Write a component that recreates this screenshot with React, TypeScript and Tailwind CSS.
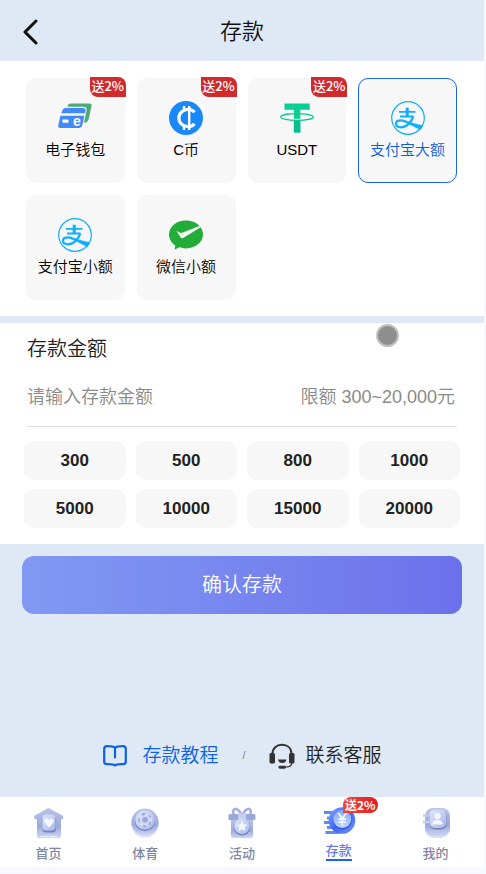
import { useState } from "react"
import type { ReactNode } from "react"
import clsx from "clsx"

function WalletIcon() {
    return (
        <svg viewBox="0 0 34 34" className="h-[34px] w-[34px]" aria-hidden="true">
            <path d="M13 2.500h18.500q2.500 0 2 2.500l-2.800 13q-.8 3.500-4.700 3.700l2.500-11.700q.8-4-3-4.200H9.500q.5-3.300 3.500-3.300z" fill="#4aab77" />
            <path d="M7.500 7h17.500q3 0 2.500 3l-.4 2.200H3.200l1.300-3q.9-2.200 3-2.200z" fill="#4389f5" />
            <path d="M2.400 14.800h24l-2.100 9.200q-.7 3-3.600 3H2.400q-2.700 0-2.100-2.900z" fill="#4389f5" />
            <rect x="4.500" y="18.500" width="6" height="3.200" rx=".6" fill="#fff" />
            <text x="18.800" y="25" textAnchor="middle" fontSize="14" fontWeight="700" fontFamily="Liberation Sans" fill="#fff">e</text>
        </svg>
    )
}

function CoinIcon() {
    return (
        <svg viewBox="0 0 34 34" className="h-[34px] w-[34px]" aria-hidden="true">
            <circle cx="17" cy="17" r="17" fill="#1989fa" />
            <g fill="none" stroke="#fff">
                <path d="M25.500 11.200A9 8.600 0 1 0 25.500 22.800" strokeWidth="3.200" />
                <path d="M15 5v5M15 24v5M20.200 5v24" strokeWidth="2.400" />
            </g>
        </svg>
    )
}

function TetherIcon() {
    return (
        <svg viewBox="0 0 34 34" className="h-[34px] w-[34px]" aria-hidden="true">
            <path d="M4.500 2.500h25.200v6.200h-9.400v22.800h-6.400V8.700H4.500z" fill="#08cf96" />
            <path d="M13.900 20h6.400v11.500h-6.400z" fill="#0bbd8a" />
            <path d="M13.900 17.800h6.400v1.200h-6.400z" fill="#f7f7f7" />
            <ellipse cx="17" cy="16" rx="16.300" ry="3.300" fill="none" stroke="#10c793" strokeWidth="1.200" />
        </svg>
    )
}

function AlipayIcon() {
    return (
        <svg viewBox="0 0 34 34" className="h-[34px] w-[34px]" aria-hidden="true">
            <circle cx="17" cy="17" r="16.300" fill="none" stroke="#10aeff" strokeWidth="1.200" />
            <g fill="none" stroke="#10aeff">
                <path d="M8 10.900h16.500M9 15.500h13.500" strokeWidth="1.900" />
                <path d="M16.200 6.700v8.800" strokeWidth="3" />
                <path d="M22.300 15.500c-2 5.600-6.600 10.800-12 10.800-3.300 0-5.400-1.400-5.300-3.500.1-2 2-3.400 4.700-3.400 3.600 0 7 2 11.200 3.900" strokeWidth="2.300" />
            </g>
            <path d="M16.500 20.300c5 1.500 10 3.300 15.800 3.900l-2.600 4.500c-4.500-1.500-9-4.200-13.500-6.200z" fill="#10aeff" />
        </svg>
    )
}

function WechatPayIcon() {
    return (
        <svg viewBox="0 0 34 34" className="h-[34px] w-[34px]" aria-hidden="true">
            <path d="M17 2.500C7.600 2.500 0 8.700 0 16.500c0 4.600 2.600 8.500 6.300 11l-.7 4.200 4.800-2.400c2 .7 4.200 1.100 6.600 1.100 9.400 0 17-6.200 17-13.900 0-2.600-.9-5.100-2.400-7.200L15 19.500c-1.400.9-2.700 1-3.700-.5L7.500 12.700c2 .8 3.500 2.600 5.600 2.100L30.500 8C27.500 4.700 22.600 2.500 17 2.500z" fill="#22ac38" />
        </svg>
    )
}

function BookIcon() {
    return (
        <svg viewBox="0 0 24 22" className="h-[22px] w-6" fill="none" stroke="#0b62e4" strokeWidth="2.200" strokeLinejoin="round" strokeLinecap="round" aria-hidden="true">
            <path d="M12 3C10.800 1.300 8.500 1.200 4 1.200 2 1.200 1.200 2 1.200 4v12.700c0 1.800.8 2.500 2.800 2.500 4.200 0 6.700-.2 8 1.400 1.300-1.600 3.800-1.400 8-1.400 2 0 2.800-.7 2.800-2.500V4c0-2-.8-2.800-2.800-2.800-4.500 0-6.800.1-8 1.800zM12 3V12.500" />
        </svg>
    )
}

function HeadsetIcon() {
    return (
        <svg viewBox="0 0 26 26" className="h-[26px] w-[26px]" aria-hidden="true">
            <path d="M3.500 11C3.500 5 7.500 1.800 13 1.800S22.500 5 22.500 11" fill="none" stroke="#333" strokeWidth="2" />
            <rect x=".5" y="10" width="5.500" height="10.500" rx="1.500" fill="#333" />
            <rect x="20" y="10" width="5.500" height="10.500" rx="1.500" fill="#333" />
            <path d="M9 16.500h8.500c-.5 2.300-2.100 3.600-4.200 3.600S9.500 18.800 9 16.500z" fill="#333" />
            <path d="M22.800 20c-.3 2.700-2.300 4-5.500 4" fill="none" stroke="#333" strokeWidth="1.300" />
            <rect x="9.500" y="22.700" width="7.500" height="3" rx="1.400" fill="#333" />
        </svg>
    )
}

// Shared gradients for the tab bar icons
function NavGradients() {
    return (
        <svg className="absolute h-0 w-0" aria-hidden="true">
            <defs>
                <linearGradient id="navBase" x1="0" y1="0" x2="0" y2="1">
                    <stop offset="0" stopColor="#b9c5ea" />
                    <stop offset=".6" stopColor="#9caad9" />
                    <stop offset="1" stopColor="#ccd5f3" />
                </linearGradient>
                <linearGradient id="navFront" x1="0" y1="0" x2="1" y2="1">
                    <stop offset="0" stopColor="#dfe6fb" />
                    <stop offset="1" stopColor="#a9b7e6" />
                </linearGradient>
                <linearGradient id="navCoin" x1="0" y1="0" x2="1" y2="1">
                    <stop offset="0" stopColor="#7fa6ff" />
                    <stop offset=".5" stopColor="#3f66ee" />
                    <stop offset="1" stopColor="#7196fb" />
                </linearGradient>
                <linearGradient id="navCoinFront" x1="0" y1="0" x2="0" y2="1">
                    <stop offset="0" stopColor="#83a9ff" />
                    <stop offset="1" stopColor="#c0d3ff" />
                </linearGradient>
            </defs>
        </svg>
    )
}

function HomeIcon() {
    return (
        <svg viewBox="0 0 36 36" className="h-9 w-9" aria-hidden="true">
            <path d="M17.300 3.500q1.200-.8 2.400 0L32.300 10.500q1 .7.8 2l-.2 1.700H31V31q0 2-2 2H9q-2 0-2-2V14.200H4.800l-.6-1.700q-.2-1.300.8-2z" fill="url(#navBase)" />
            <path d="M10 31.500h17" stroke="#e4e9fa" strokeWidth="1.500" />
            <rect x="12.500" y="11" width="13.500" height="16.500" rx="3.500" fill="#7583c2" />
            <rect x="12.500" y="9.500" width="13" height="16" rx="3.500" fill="url(#navFront)" />
            <path d="M19 22.500l-4.200-4.700c-2-2.700 1.700-6 4.200-3 2.500-3 6.200.3 4.200 3z" fill="#f6f8ff" />
        </svg>
    )
}

function SportIcon() {
    return (
        <svg viewBox="0 0 36 36" className="h-9 w-9" aria-hidden="true">
            <circle cx="18" cy="18.500" r="14" fill="#d9e0f6" />
            <circle cx="18" cy="17" r="13.500" fill="url(#navBase)" />
            <circle cx="18" cy="16.200" r="10" fill="#7280c1" />
            <circle cx="18" cy="15" r="9.800" fill="url(#navFront)" />
            <circle cx="18" cy="15" r="7.200" fill="#d3dcf8" />
            <path d="M16 12.500l3.500-.7 2 3-2 3-3.500-.6-1-2.500zM14.500 8.500l4-.7-.5 2.200-2.800.8zM22 9.500l2.500 3-1.800.3-1.500-2zM11 13l1.800 1 .2 3-1.500.8zM16 20l3 .3v2h-2.500zM22.500 16.500l2 .5-2 3.500-1.200-.8z" fill="#9aa9da" />
        </svg>
    )
}

function GiftIcon() {
    return (
        <svg viewBox="0 0 36 36" className="h-9 w-9" aria-hidden="true">
            <path d="M17 9C14 3 9.500 2.500 9.300 6.500 9.200 8.500 10 10 11 10.500M19 9c3-6 7.500-6.500 7.700-2.500.1 2-.7 3.500-1.700 4" fill="none" stroke="#a4b1dd" strokeWidth="2.600" />
            <path d="M7 14h22v17q0 2-2 2H9q-2 0-2-2z" fill="url(#navBase)" />
            <rect x="4.500" y="9" width="27" height="6" rx="1.500" fill="#9ba9da" />
            <path d="M14 8.500h8V15h-8z" fill="#c4cef0" />
            <circle cx="18" cy="22.500" r="8" fill="#7583c2" />
            <circle cx="18" cy="21.300" r="7.700" fill="url(#navFront)" />
            <path d="M18 15.800l1.700 3.400 3.700.5-2.700 2.600.7 3.700-3.400-1.800-3.400 1.800.7-3.700-2.700-2.600 3.700-.5z" fill="#f4f6ff" />
        </svg>
    )
}

function DepositIcon() {
    return (
        <svg viewBox="0 0 36 36" className="h-9 w-9" aria-hidden="true">
            <path d="M3 7.500h10M6 13h9M3 17.500h10M6 22.500h9M4.500 27.500h13" stroke="#6389f2" strokeWidth="3" />
            <circle cx="21" cy="15.500" r="13.300" fill="url(#navCoin)" />
            <circle cx="21.500" cy="15" r="9.300" fill="#3157d8" />
            <circle cx="21.300" cy="14" r="9" fill="url(#navCoinFront)" />
            <path d="M17.300 8l4 5.500L25.300 8M21.300 13.500V20.500M17.500 14h7.600M17.500 17.200h7.600" fill="none" stroke="#f5f8ff" strokeWidth="1.800" />
        </svg>
    )
}

function MineIcon() {
    return (
        <svg viewBox="0 0 36 36" className="h-9 w-9" aria-hidden="true">
            <rect x="7" y="4" width="25" height="29" rx="9" fill="#d9e0f6" />
            <rect x="7" y="3" width="25" height="28" rx="8" fill="url(#navBase)" />
            <rect x="11.500" y="6" width="17" height="18.500" rx="5" fill="#7583c2" />
            <rect x="11.500" y="4.500" width="16.500" height="18.500" rx="5" fill="url(#navFront)" />
            <path d="M5 10.500h6M5 17h6" stroke="#c3cdec" strokeWidth="2.400" />
            <circle cx="19.500" cy="11" r="3.200" fill="#f4f6ff" />
            <path d="M14 19.500q.5-4.500 5.500-4.500t5.500 4.500z" fill="#f4f6ff" />
        </svg>
    )
}

type Method = { id: string; label: string; icon: ReactNode; bonus?: string }

const METHODS: Method[] = [
    { id: "wallet", label: "电子钱包", icon: <WalletIcon />, bonus: "送2%" },
    { id: "ccoin", label: "C币", icon: <CoinIcon />, bonus: "送2%" },
    { id: "usdt", label: "USDT", icon: <TetherIcon />, bonus: "送2%" },
    { id: "alipay-large", label: "支付宝大额", icon: <AlipayIcon /> },
    { id: "alipay-small", label: "支付宝小额", icon: <AlipayIcon /> },
    { id: "wechat-small", label: "微信小额", icon: <WechatPayIcon /> },
]

const AMOUNTS = [300, 500, 800, 1000, 5000, 10000, 15000, 20000]

const TABS: Method[] = [
    { id: "home", label: "首页", icon: <HomeIcon /> },
    { id: "sport", label: "体育", icon: <SportIcon /> },
    { id: "promo", label: "活动", icon: <GiftIcon /> },
    { id: "deposit", label: "存款", icon: <DepositIcon />, bonus: "送2%" },
    { id: "mine", label: "我的", icon: <MineIcon /> },
]

export default function App() {
    const [method, setMethod] = useState("alipay-large")
    const [amount, setAmount] = useState("")

    return (
        <div className="flex min-h-screen flex-col bg-[#f7f9fe] pr-0.5 pb-[7px] font-['Liberation_Sans','Noto_Sans_CJK_SC',sans-serif] font-[350]">
            <NavGradients />
            <header className="grid grid-cols-[60px_1fr_60px] items-center border-t-2 border-[#e6eaf0] bg-[#dfe9f5] py-3">
                <button type="button" aria-label="返回" className="flex h-[35px] items-center pl-[22px]">
                    <svg viewBox="0 0 16 26" className="h-[26px] w-4" fill="none" stroke="#111" strokeWidth="3" strokeLinecap="round" strokeLinejoin="round">
                        <path d="M14 2L3 13l11 11" />
                    </svg>
                </button>
                <h1 className="text-center text-[22px] leading-8 font-[350] text-[#111]">存款</h1>
            </header>

            <main className="flex flex-1 flex-col bg-[#dfe9f5]">
                <section className="grid grid-cols-4 gap-3 bg-white pt-[17px] pr-[27px] pb-4 pl-[26px]">
                    {METHODS.map((m) => (
                        <button
                            key={m.id}
                            type="button"
                            aria-pressed={method === m.id}
                            onClick={() => setMethod(m.id)}
                            className={clsx(
                                "relative flex h-[105px] flex-col items-center rounded-[10px] border bg-[#f7f7f7] pt-[22px] text-[15px]",
                                method === m.id ? "border-[#1a66e0] text-[#0b5ce0]" : "border-[#f7f7f7] text-black"
                            )}
                        >
                            {m.icon}
                            <span className="mt-[3px] leading-6 whitespace-nowrap">{m.label}</span>
                            {m.bonus && (
                                <span className="absolute -top-0.5 -right-0.5 h-5 w-9 rounded-tr-lg rounded-bl-lg bg-[#d02a2c] text-center font-['Noto_Sans_CJK_SC',sans-serif] text-[13px] leading-[18px] font-medium text-white">
                                    {m.bonus}
                                </span>
                            )}
                        </button>
                    ))}
                </section>

                <section className="relative mt-[7px] bg-white px-6 pt-3 pb-4">
                    <label htmlFor="amount" className="block pl-[3px] text-xl leading-7 text-[#222]">
                        存款金额
                    </label>
                    <div className="mx-[3px] mt-1 flex h-[60px] items-center justify-between border-b border-[#ddd] pr-0.5 text-lg text-[#8a8a8a]">
                        <input
                            id="amount"
                            inputMode="numeric"
                            placeholder="请输入存款金额"
                            value={amount}
                            onChange={(e) => setAmount(e.target.value.replace(/\D/g, ""))}
                            className="min-w-0 flex-1 bg-transparent text-[#222] outline-none placeholder:text-[#8a8a8a]"
                        />
                        <span className="whitespace-nowrap">限额 300~20,000元</span>
                    </div>
                    <div className="mt-3.5 grid grid-cols-4 gap-x-2.5 gap-y-[9px]">
                        {AMOUNTS.map((value) => (
                            <button
                                key={value}
                                type="button"
                                onClick={() => setAmount(String(value))}
                                className="h-[39px] rounded-[10px] bg-[#f7f7f7] text-[17px] font-bold text-[#222]"
                            >
                                {value}
                            </button>
                        ))}
                    </div>
                    {/* touch pointer */}
                    <span className="absolute top-px right-[85px] h-[23px] w-[23px] rounded-full border-2 border-[#c0c0c0] bg-[#8e8e8e]" />
                </section>

                <div className="px-[22px] pt-3">
                    <button
                        type="button"
                        className="h-[58px] w-full rounded-xl bg-linear-to-r from-[#8299f3] to-[#6c71eb] text-xl text-white"
                    >
                        确认存款
                    </button>
                </div>

                <div className="mt-auto flex items-center justify-center pt-8 pb-[27px] text-[19px] leading-7">
                    <a href="#guide" className="flex items-center gap-4 text-[#0b62e4]">
                        <BookIcon />
                        存款教程
                    </a>
                    <span className="px-6 text-[10px] text-[#777]">/</span>
                    <a href="#service" className="flex items-center gap-2.5 text-[#222]">
                        <HeadsetIcon />
                        联系客服
                    </a>
                </div>
            </main>

            <nav className="grid h-[70px] grid-cols-5 bg-white font-['Noto_Sans_CJK_SC',sans-serif] text-[13px] font-medium">
                {TABS.map((tab) => {
                    const active = tab.id === "deposit"
                    return (
                        <a key={tab.id} href={`#${tab.id}`} className="relative flex flex-col items-center pt-2">
                            {tab.icon}
                            <span
                                className={clsx(
                                    active
                                        ? "border-b-2 border-[#1a66e0] leading-[18px] text-[#6a7bea]"
                                        : "pt-0.5 leading-5 text-[#7f86a3]"
                                )}
                            >
                                {tab.label}
                            </span>
                            {tab.bonus && (
                                <span className="absolute top-0 left-1/2 ml-1 h-4 w-[35px] rounded-full rounded-bl-none bg-linear-to-r from-[#f0453c] to-[#e5161c] text-center text-xs leading-4 font-bold text-white">
                                    {tab.bonus}
                                </span>
                            )}
                        </a>
                    )
                })}
            </nav>
        </div>
    )
}
